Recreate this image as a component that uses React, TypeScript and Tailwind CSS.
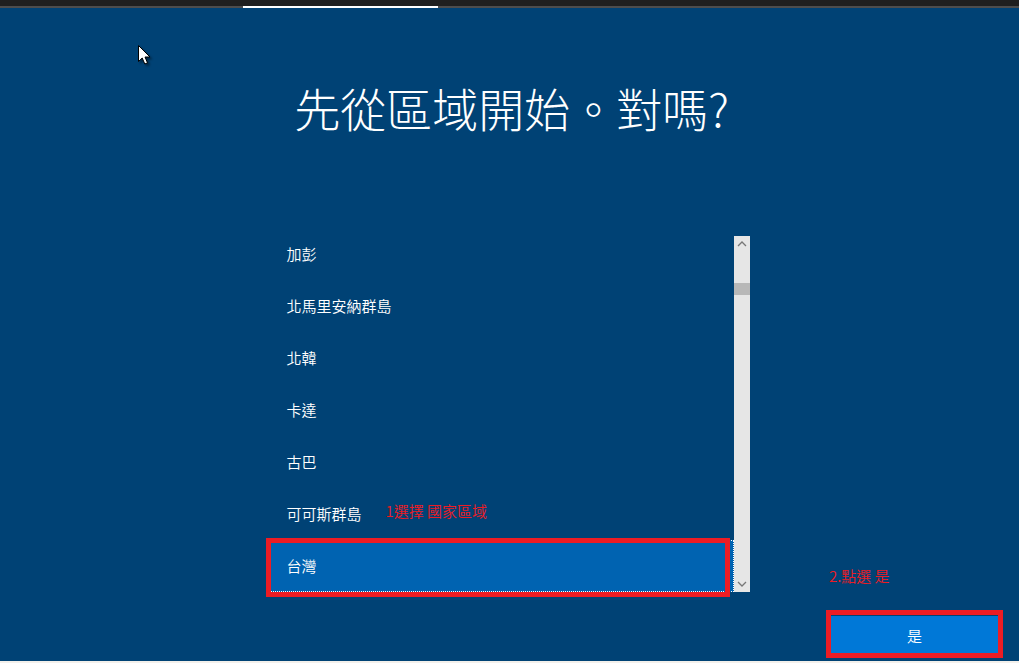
import { useState } from "react";

const regions = ["加彭", "北馬里安納群島", "北韓", "卡達", "古巴", "可可斯群島", "台灣"];

function ScrollBar() {
  return (
    <div className="flex w-4 flex-col items-center bg-[#e6e6e6] text-[#777]">
      <button type="button" aria-label="向上捲動" className="flex h-4 w-4 items-center justify-center">
        <svg width="10" height="6" viewBox="0 0 10 6" fill="none" stroke="currentColor" strokeWidth="1.3">
          <path d="M1 5 5 1l4 4" />
        </svg>
      </button>
      <div className="mt-[31px] h-3 w-full bg-[#b8b8b8]" />
      <button type="button" aria-label="向下捲動" className="mt-auto flex h-4 w-4 items-center justify-center">
        <svg width="10" height="6" viewBox="0 0 10 6" fill="none" stroke="currentColor" strokeWidth="1.3">
          <path d="M1 1l4 4 4-4" />
        </svg>
      </button>
    </div>
  );
}

export default function App() {
  const [selected, setSelected] = useState("台灣");
  return (
    <div className="relative flex min-h-screen flex-col border-b-2 border-[#f3f0eb] bg-[#004275] font-['Noto_Sans_CJK_TC_DemiLight','Noto_Sans_CJK_TC',sans-serif] text-[15px] leading-5 text-white">
      <header className="flex h-2 flex-col bg-[#1f1f1f]">
        <div className="mt-auto flex h-0.5 bg-[#4d4d4d]">
          <div className="ml-[243px] w-[195px] bg-white" />
        </div>
      </header>

      <h1 className="mt-[66px] pl-1 text-center font-['Noto_Sans_CJK_TC_Light','Noto_Sans_CJK_TC',sans-serif] text-[46px] leading-[66px] font-light">
        先從區域開始。對嗎?
      </h1>

      <div className="mt-24 grid flex-1 grid-cols-[1fr_480px_1fr]">
        <main className="col-start-2 flex self-start">
          <ul className="-mt-2 flex-1">
            {regions.map((name) => (
              <li key={name} className="relative h-[52px]">
                <button
                  type="button"
                  aria-pressed={selected === name}
                  onClick={() => setSelected(name)}
                  className={
                    selected === name
                      ? "flex h-full w-full items-center border border-dotted border-white bg-[#0063b1] px-4"
                      : "flex h-full w-full items-center border border-transparent px-4"
                  }
                >
                  {name}
                </button>
                {name === "可可斯群島" && (
                  <span className="absolute top-[13px] left-[116px] text-[#ed1c24]">1選擇 國家區域</span>
                )}
                {selected === name && (
                  <span className="pointer-events-none absolute -top-0.5 right-1 -bottom-[5px] -left-1 border-[5px] border-[#ed1c24]" />
                )}
              </li>
            ))}
          </ul>
          <ScrollBar />
        </main>

        <footer className="mr-4 mb-[3px] flex w-[177px] flex-col self-end justify-self-end">
          <p className="mb-6 px-[3px] text-[#ed1c24]">2.點選 是</p>
          <button
            type="button"
            className="h-12 border-[5px] border-[#ed1c24] bg-[#0078d7] pt-1 shadow-[inset_0_1px_0_#004275]"
          >
            是
          </button>
        </footer>
      </div>

      <svg className="absolute top-[45px] left-[138px] drop-shadow-[2px_2px_1px_rgba(0,0,0,0.4)]" width="13" height="20" viewBox="0 0 13 20">
        <path d="M.5.5v16l3.7-3.5 2.6 6 2.7-1.2L7 12h5z" fill="white" stroke="black" />
      </svg>
    </div>
  );
}
